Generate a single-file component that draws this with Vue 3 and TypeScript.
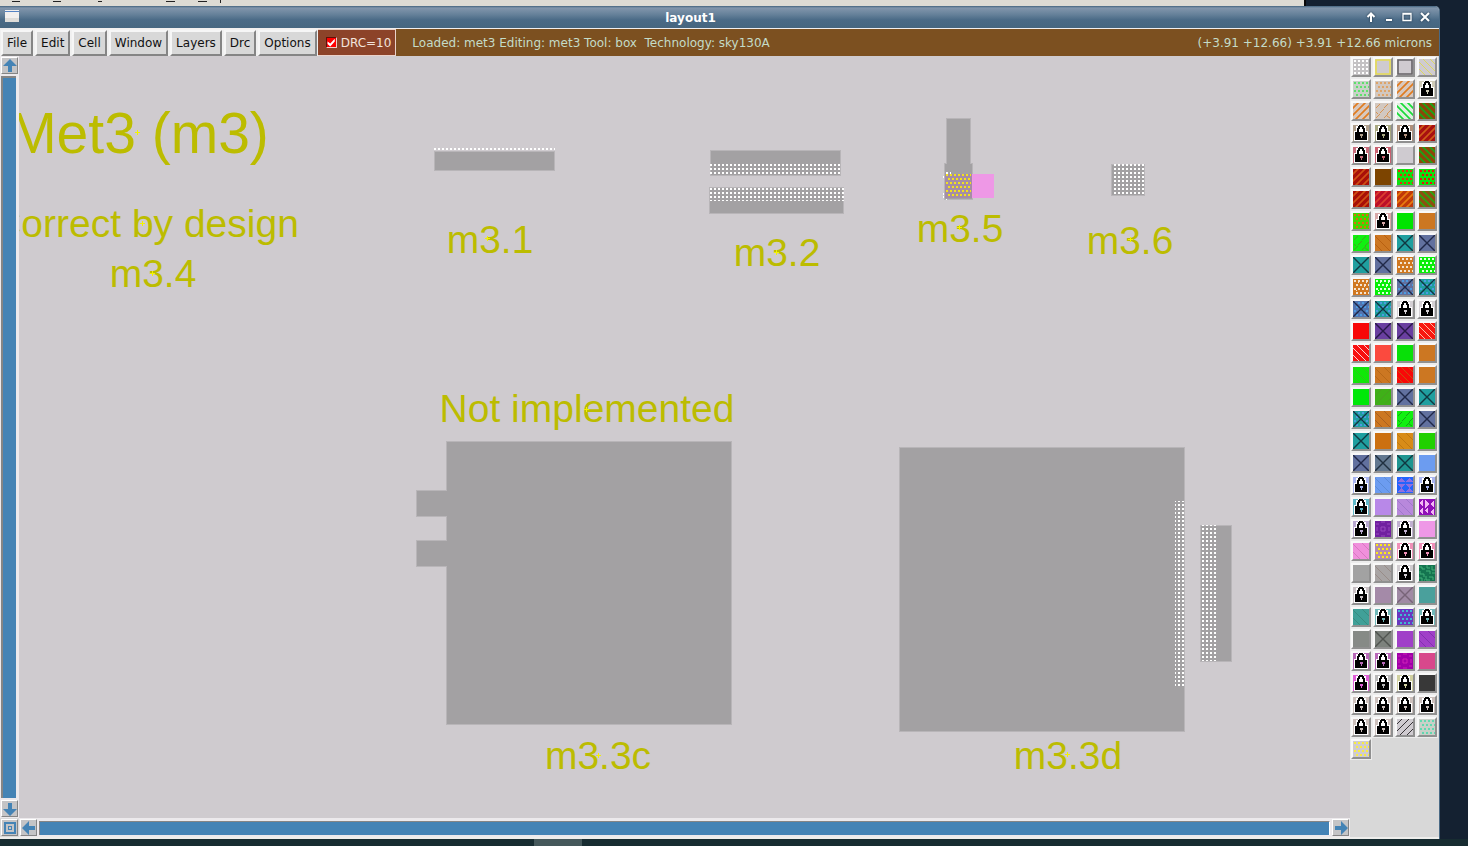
<script setup lang="ts">
import { ref } from 'vue'

interface Label { text: string; x: number; y: number; cx: number; cy: number; big?: boolean }
interface Swatch { kind: string; bg: string; fg: string }

const menus = ['File', 'Edit', 'Cell', 'Window', 'Layers', 'Drc', 'Options']
const drc = ref(true)

const labels: Label[] = [
  { text: 'Met3 (m3)', x: 139, y: 153, cx: 137, cy: 132, big: true },
  { text: 'Correct by design', x: 146, y: 237, cx: 142, cy: 223 },
  { text: 'm3.4', x: 153, y: 287, cx: 152, cy: 273 },
  { text: 'm3.1', x: 490, y: 253, cx: 487, cy: 238 },
  { text: 'm3.2', x: 777, y: 266, cx: 776, cy: 252 },
  { text: 'm3.5', x: 960, y: 242, cx: 959, cy: 227 },
  { text: 'm3.6', x: 1130, y: 254, cx: 1130, cy: 239 },
  { text: 'Not implemented', x: 587, y: 422, cx: 586, cy: 409 },
  { text: 'm3.3c', x: 598, y: 769, cx: 598, cy: 755 },
  { text: 'm3.3d', x: 1068, y: 769, cx: 1067, cy: 754 },
]

// One entry per layer: kind, background, foreground
const palette = `
dots c4c2c4 ffffff|frame cfcbd0 e6dc50|frame cfcbd0 666366|fine cfcbd0 dcd860
stag c8d2c8 5ee06c|stag d2c8c0 dea468|rise d8c8be e07c20|lock cfcbb8 -
rise d8c8be e07c20|dash d2c8c0 d89450|fall e0eee0 18dc38|fall 8c4808 18a818
lock b0a08c -|lock a8a880 -|lock b0907c -|rise a81010 d05c18
lock c86c7c -|lock c86070 -|solid cfcbd0 -|fall 8c4808 18a818
rise a81008 d05014|solid 7c4400 -|stag 10e010 e03010|stag 10e010 e81010
rise a81008 d05014|rise bc1028 dc4030|rise c03808 e87c10|fall 8c5010 28a810
stag 40d800 e06a10|lock d8a8a8 -|solid 00e400 -|solid cc7722 -
dash 10f010 48a020|wane cc7722 b86010|cross 1f9f9f 103840|cross 62719f 202848
cross 1f9f9f 103840|cross 62719f 202848|stag d07820 f4e4d0|stag 08ee08 e0ffe0
mix d07820 f4e4d0|mix 08ee08 e0ffe0|dotx 62719f 202848|dotx 1f9f9f 103840
dotx 5274b0 202848|dotx 1f9f9f 103840|lock d4d0d4 -|lock d4d0d4 -
solid f80808 -|cross 6a3fa0 281848|cross 6a3fa0 281848|fine f81810 ffc0a8
fine f81010 ffd0d0|solid fb4a3e -|solid 08e008 -|solid cc7722 -
wane 10e808 30c818|wane cc7722 b86818|fine f80808 c85010|solid cc7722 -
solid 00e808 -|wax 3fb018 48a020|cross 62719f 202848|cross 1f9f9f 103840
dotx 1f9f9f 103840|wane cc7722 a86020|dash 10f010 18a018|cross 62719f 202848
cross 1f9f9f 103840|solid cc7010 -|wane d88c18 c07810|solid 20d000 -
cross 62719f 202848|cross 627890 203040|cross 1f9590 103840|solid 6c9cf0 -
lock a8b4f0 -|wane 6c9cf0 5c8cd8|tri 2464fc 9070e0|lock a8b4f0 -
lock 60b8c8 -|solid b888e8 -|wane b888dc a078cc|gem 9010b8 f4b8f4
lock b8a8d0 -|ring 7020a0 9848c0|lock c0b0d0 -|solid ee98e6 -
wane f090dc d878c0|stag b48cac ffec10|lock f090b8 -|lock f090b8 -
solid a2a2a2 -|wane a8a4a4 988c88|lock d0ccd0 -|maze 147450 40b078
lock c8c0c4 -|solid a48aa8 -|cross a08aa4 786478|solid 4aa09c -
wane 40a098 388c80|lock 70b8b8 -|stag 6838c0 40b8d0|lock 70b8b8 -
solid 868a86 -|cross 7d827d 505450|solid a040c8 -|wane a040c8 8430b0
lock b868b8 -|lock b868b8 -|ring a000a8 d020b8|solid d8488c -
lock e060d8 -|lock b8b8b8 -|lock d0d0a0 -|solid 383838 -
lock ccc0bc -|lock ccc0bc -|lock ccc0bc -|lock ccc0bc -
lock ccc0bc -|lock ccc0bc -|thin cfcbd0 383438|stag c8d0c8 60d8b0
stag cfcbd0 f8ec40`

const swatches: Swatch[] = palette.trim().split(/[\n|]/).map((entry) => {
  const [kind, bg, fg] = entry.split(' ')
  return { kind, bg: '#' + bg, fg: fg === '-' ? 'none' : '#' + fg }
})

function grid(shift: number): string {
  let d = ''
  for (let row = 0; row < 4; row++) {
    for (let col = 0; col < 4; col++) {
      const x = 1 + col * 4 + (row % 2 ? shift : 0)
      const w = Math.min(2, 16 - x)
      d += `M${x} ${1 + row * 4}h${w}v2h-${w}z`
    }
  }
  return d
}

const fills: Record<string, string> = {
  dots: grid(0),
  stag: grid(2),
  mix: grid(2) + 'M5 3h1v1h-1zM11 7h1v1h-1zM3 11h1v1h-1zM13 3h1v1h-1z',
  tri: 'M4 1l4 4H0zM12 1l4 4H8zM0 7h8l-4 4zM8 7h8l-4 4zM4 11l4 4H0zM12 11l4 4H8z',
  gem: 'M4 0v7L0 4zM6 1l4 4-4 4zM15 1v8l-4-4zM4 8v8l-4-4zM9 8v7l-3-3zM15 10v6l-4-3z',
}

const strokes: Record<string, string> = {
  rise: 'M-1 6L6-1M-1 13L13-1M2 17L17 2M9 17L17 9',
  thin: 'M-1 6L6-1M-1 13L13-1M2 17L17 2M9 17L17 9',
  fall: 'M10-1L17 6M3-1L17 13M-1 2L14 17M-1 9L7 17',
  fine: 'M10-1L17 6M3-1L17 13M-1 2L14 17M-1 9L7 17',
  wane: 'M9 0L16 7M0 1L15 16M0 9L7 16',
  wax: 'M0 7L7 0M1 15L15 1M9 16L16 9',
  dash: 'M1 5l4-4M9 5l4-4M5 10l4-4M12 11l4-4M1 15l4-4M9 15l4-4M1 9l2 2M12 13l3 2',
  cross: 'M0 0L16 16M16 0L0 16',
  dotx: 'M0 0L16 16M16 0L0 16',
  frame: 'M1 1H15V15H1Z',
  ring: 'M1 3h3M6 1h4M12 3h3M6 6h4v4h-4zM2 6v4M14 6v4M1 13h3M6 15h4M12 13h3',
  maze: 'M0 2h3v2h3M8 0v3h3M13 1v4h3M1 6v3h4v3M7 6h4v3M13 8h3M0 13h3v3M7 11v4h4M10 12h4v3M5 15h1',
}

function weight(kind: string): number {
  if (kind === 'rise' || kind === 'fall') return 1.7
  if (kind === 'cross' || kind === 'dotx') return 1.4
  return kind === 'frame' ? 1.6 : 1
}

const gray = [
  [434, 151, 121, 20], [710, 150, 131, 26], [709, 187, 135, 27],
  [946, 118, 25, 50], [944, 163, 29, 37], [1111, 164, 34, 32],
  [446, 441, 286, 284], [416, 490, 32, 27], [416, 540, 32, 27],
  [899, 447, 286, 285], [1200, 525, 32, 137],
]
const dotted = [
  [434, 148, 121, 3], [710, 164, 130, 12], [710, 188, 134, 13],
  [1113, 164, 31, 31], [1175, 501, 9, 186], [1201, 525, 16, 136],
]
const specks = [[12, 8], [53, 8], [98, 4], [166, 9], [198, 9]]
</script>

<template>
  <div class="desktop">
    <div class="behind">
      <div class="sheet">
        <svg width="240" height="6" aria-hidden="true">
          <path v-for="s in specks" :key="s[0]" :d="`M${s[0]} 1h${s[1]}v1h-${s[1]}z`" fill="#222" />
          <path d="M220 0h1v3h-1z" fill="#222" />
        </svg>
      </div>
    </div>

    <main class="window">
      <header class="titlebar">
        <svg class="app-icon" viewBox="0 0 16 14" width="16" height="14" aria-hidden="true">
          <path d="M1 0h14v12H1z" fill="#f2f0ee" /><path d="M1 1h14v1H1z" fill="#5684c4" />
          <path d="M1 8h14v4H1z" fill="#dedcd8" />
        </svg>
        <h1>layout1</h1>
        <div class="controls">
          <button aria-label="Shade"><svg viewBox="0 0 12 12"><path d="M6 11V3M2.500 6L6 2.500 9.500 6" stroke-width="2" /></svg></button>
          <button aria-label="Minimize"><svg viewBox="0 0 12 12"><path d="M3 9h6" stroke-width="2" /></svg></button>
          <button aria-label="Maximize"><svg viewBox="0 0 12 12"><path d="M2 2.500h8v7H2zM2 3h8" stroke-width="1.300" /></svg></button>
          <button aria-label="Close"><svg viewBox="0 0 12 12"><path d="M2 2l8 8M10 2l-8 8" stroke-width="2" /></svg></button>
        </div>
      </header>

      <nav class="menubar">
        <div class="menus">
          <button v-for="m in menus" :key="m">{{ m }}</button>
        </div>
        <label class="drc"><input v-model="drc" type="checkbox" />DRC=10</label>
        <div class="status">
          <span class="loaded">Loaded: met3 Editing: met3 Tool: box&nbsp; Technology: sky130A</span>
          <span>(+3.91 +12.66) +3.91 +12.66 microns</span>
        </div>
      </nav>

      <div class="body">
        <div class="vscroll">
          <button class="step" aria-label="Scroll up"><svg viewBox="0 0 14 14"><path d="M7 0l7 7H9v6H5V7H0z" /></svg></button>
          <div class="track"></div>
          <button class="step" aria-label="Scroll down"><svg viewBox="0 0 14 14"><path d="M7 14l7-7H9V1H5v6H0z" /></svg></button>
        </div>

        <svg class="canvas" role="img" aria-label="Layout drawing">
          <defs>
            <pattern id="via" width="4" height="4" patternUnits="userSpaceOnUse" patternTransform="translate(2 0)">
              <path d="M0 0h2v2H0z" fill="#fff" />
            </pattern>
            <pattern id="gold" width="4" height="8" patternUnits="userSpaceOnUse" patternTransform="translate(2 6)">
              <path d="M0 0h2v2H0zM2 4h2v2H2z" fill="#f2e21c" />
            </pattern>
          </defs>
          <g transform="translate(-19 -56)">
            <rect v-for="(r, i) in gray" :key="'e' + i" :x="r[0]" :y="r[1]" :width="r[2]" :height="r[3]" fill="#b8b5b8" />
            <rect v-for="(r, i) in gray" :key="'g' + i" :x="r[0] + 1" :y="r[1] + 1" :width="r[2] - 2" :height="r[3] - 2" fill="#a3a1a3" />
            <rect x="972" y="174" width="22" height="24" fill="#ee98e6" />
            <rect x="945" y="174" width="27" height="24" fill="#a58da5" />
            <rect x="946" y="174" width="25" height="23" fill="url(#gold)" />
            <path d="M946 172h2v2h-2zM950 172h1v2h-1zM943 176h1v2h-1zM943 193h1v2h-1zM943 196h1v2h-1zM946 199h1v1h-1z" fill="#fff" />
            <rect v-for="(r, i) in dotted" :key="'d' + i" :x="r[0]" :y="r[1]" :width="r[2]" :height="r[3]" fill="url(#via)" />
            <g v-for="l in labels" :key="l.text">
              <text :x="l.x" :y="l.y" :class="{ big: l.big }">{{ l.text }}</text>
              <path :d="`M${l.cx - 2} ${l.cy}h5v1h-5zM${l.cx} ${l.cy - 2}h1v5h-1z`" fill="#f4f400" />
            </g>
          </g>
        </svg>

        <button class="step corner" aria-label="View all">
          <svg viewBox="0 0 14 14"><path d="M1 1h12v12H1zM3 3v8h8V3zM5 5h4v4H5zM6 6v2h2V6z" fill-rule="evenodd" /></svg>
        </button>
        <div class="hscroll">
          <button class="step" aria-label="Scroll left"><svg viewBox="0 0 14 14"><path d="M0 7l7-7v5h6v4H7v5z" /></svg></button>
          <div class="track"></div>
          <button class="step" aria-label="Scroll right"><svg viewBox="0 0 14 14"><path d="M14 7L7 0v5H1v4h6v5z" /></svg></button>
        </div>

        <aside class="palette">
          <button v-for="(s, i) in swatches" :key="i" :aria-label="`Layer ${i + 1}`">
            <svg viewBox="0 0 16 16" shape-rendering="crispEdges">
              <rect width="16" height="16" :fill="s.bg" />
              <path v-if="s.kind === 'dotx'" :d="fills.stag" fill="#4c9be0" />
              <path v-if="fills[s.kind]" :d="fills[s.kind]" :fill="s.fg" />
              <path v-if="strokes[s.kind]" :d="strokes[s.kind]" :stroke="s.fg" :stroke-width="weight(s.kind)" fill="none" shape-rendering="auto" />
              <template v-if="s.kind === 'lock'">
                <path d="M3 1h2v-1h6v1h2v5h2v10H1V6h2z" fill="#fff" />
                <path d="M2 7h2V3h1V1h1V0h4v1h1v2h1v4h2v8H2zM6 7h4V4H9V2H7v2H6z" fill="#000" fill-rule="evenodd" />
                <path d="M7 9h3v2H9v2H8v-2H7z" :fill="s.bg" />
              </template>
            </svg>
          </button>
        </aside>
      </div>
    </main>
    <footer class="taskbar"><div class="task"></div></footer>
  </div>
</template>

<style>
html, body { margin: 0; background: #142131; }
</style>

<style scoped>
.desktop {
  height: 100vh;
  min-height: 820px;
  display: flex;
  flex-direction: column;
  background: #142131;
  font: 12px "DejaVu Sans", sans-serif;
  overflow: hidden;
}
button { margin: 0; padding: 0; font: inherit; color: inherit; box-sizing: border-box; }
svg { display: block; }
.behind { height: 6px; flex: none; margin-right: 162px; }
.sheet { height: 6px; background: #dddbd4; border-right: 2px solid #080808; overflow: hidden; }
.window {
  flex: 1;
  min-height: 0;
  margin-right: 28px;
  display: flex;
  flex-direction: column;
  border-right: 1px solid #4a6a85;
  border-radius: 0 5px 0 0;
  background: #d8d8d8;
  overflow: hidden;
}
.titlebar {
  height: 22px;
  flex: none;
  display: flex;
  align-items: center;
  padding: 0 8px 0 4px;
  background: linear-gradient(#43647f 0, #8296ac 2px, #637f98 9px, #4a6a86 14px, #46667f);
  border-bottom: 1px solid #f0eeee;
}
.titlebar h1 { flex: 1; margin: 0; padding: 2px 4px 0 0; font-size: 12px; line-height: 22px; text-align: center; color: #fff; }
.controls { display: flex; gap: 6px; }
.controls button { width: 12px; height: 12px; border: 0; background: none; }
.controls svg { width: 12px; height: 12px; fill: none; stroke: #fff; filter: drop-shadow(0 0 1px #1c3448); }
.menubar { height: 27px; flex: none; display: flex; background: #7c5020; color: #c4dcc8; }
.menus { display: flex; gap: 2px; padding: 1px 1px 0; background: #f0f0f0; }
.menus button {
  padding: 0 4px;
  border: 2px solid;
  border-color: #f6f6f6 #858585 #858585 #f6f6f6;
  background: #d8d8d8;
  color: #111;
}
.drc {
  display: flex;
  align-items: center;
  gap: 4px;
  padding: 0 4px 0 8px;
  border: 1px solid #ead2ca;
  border-left: 0;
  background: #8c4329;
  color: #f2e4dc;
}
.drc input {
  appearance: none;
  width: 11px;
  height: 11px;
  margin: 0;
  box-sizing: border-box;
  border: 1px solid;
  border-color: #601008 #f0d0c8 #f0d0c8 #601008;
  background: #f00;
}
.drc input:checked::before {
  content: "";
  display: block;
  width: 9px;
  height: 9px;
  background: #fff;
  clip-path: polygon(10% 38%, 40% 62%, 90% 8%, 90% 38%, 40% 94%, 10% 66%);
}
.status { flex: 1; display: flex; align-items: center; justify-content: space-between; padding: 0 7px 0 16px; white-space: pre; }
.body {
  flex: 1;
  min-height: 0;
  display: grid;
  grid-template-columns: 19px 1fr 89px;
  grid-template-rows: 1fr 19px;
  border-bottom: 2px solid #eeeeec;
}
.vscroll { display: flex; flex-direction: column; gap: 2px; padding: 1px; background: #ece9ec; }
.vscroll .track { flex: 1; border-left: 2px solid #858585; border-top: 2px solid #858585; background: #4483b5; margin-right: 2px; }
.hscroll { display: flex; align-items: center; gap: 2px; padding: 0 1px; background: #ece9ec; }
.hscroll .track { flex: 1; height: 14px; border-left: 1px solid #858585; border-top: 1px solid #858585; border-right: 1px solid #fff; background: #4483b5; box-sizing: border-box; }
.step {
  width: 17px;
  height: 17px;
  flex: none;
  border: 1px solid;
  border-color: #fff #858585 #858585 #fff;
  background: #c4c4c6;
  display: grid;
  place-items: center;
}
.step svg { width: 14px; height: 14px; fill: #4483b5; }
.corner { margin: 1px; grid-column: 1; grid-row: 2; }
.hscroll { grid-column: 2; grid-row: 2; }
.canvas { grid-column: 2; grid-row: 1; width: 100%; height: 100%; background: #cfcbcf; }
.canvas text { font: 39px "Liberation Sans", sans-serif; fill: #bcbc00; text-anchor: middle; }
.canvas text.big { font-size: 57px; }
.palette {
  grid-column: 3;
  grid-row: 1 / 3;
  display: grid;
  grid-template-columns: repeat(4, 20px);
  grid-auto-rows: 20px;
  gap: 2px;
  align-content: start;
  padding: 1px;
  background: #d8d8d8;
}
.palette button {
  border: 2px solid;
  border-color: #f8f8f8 #909090 #909090 #f8f8f8;
  background: none;
  outline: 1px solid #ececec;
}
.palette svg { width: 16px; height: 16px; }
.taskbar { height: 7px; flex: none; background: #172c31; padding-left: 534px; }
.task { width: 48px; height: 7px; background: #45585b; }
</style>
